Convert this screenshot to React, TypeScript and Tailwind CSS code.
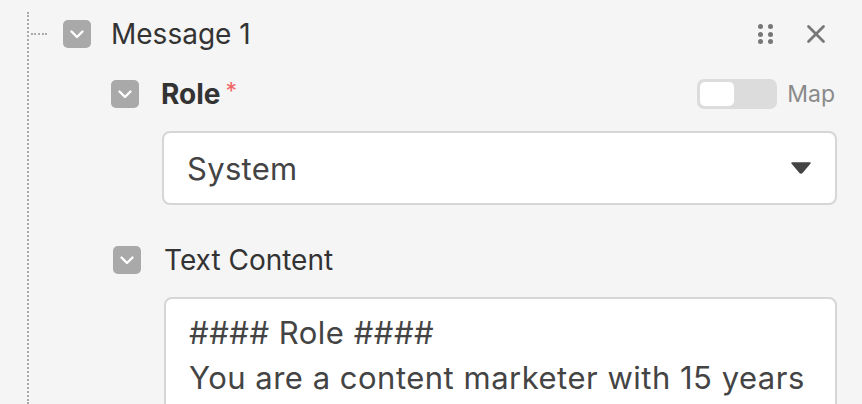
import { X } from "lucide-react";

function Check({ className = "" }: { className?: string }) {
  return (
    <div
      className={`flex h-[28px] w-[28px] shrink-0 items-center justify-center rounded-[5px] bg-[#a9a9a9] ${className}`}
    >
      <svg width="16" height="16" viewBox="0 0 16 16" fill="none">
        <path d="M2.5 5.5 8 11 13.5 5.5" stroke="white" strokeWidth="2.4" strokeLinecap="round" strokeLinejoin="round" />
      </svg>
    </div>
  );
}

function Grip() {
  return (
    <div className="grid grid-cols-2 gap-x-[5px] gap-y-[2.5px]">
      {[0, 1, 2, 3, 4, 5].map((i) => (
        <span key={i} className="h-[5px] w-[5px] rounded-full bg-[#777]" />
      ))}
    </div>
  );
}

export default function App() {
  return (
    <div
      className="h-[404px] w-[862px] overflow-hidden bg-[#f5f5f5] text-[#333]"
      style={{ fontFamily: "Inter, 'Noto Sans', sans-serif" }}
    >
      <div className="ml-[27px] mt-[12px] flex h-[392px] border-l-2 border-dotted border-[#aaa]">
        <div className="flex-1">
          {/* Message header */}
          <div className="flex h-[44px] items-center pr-[31px]">
            <div className="ml-[2px] w-[16px] border-t-2 border-dotted border-[#aaa]" />
            <Check className="ml-[16px]" />
            <span className="ml-[20px] text-[28px] leading-none">Message 1</span>
            <div className="ml-auto flex items-center gap-[28px]">
              <Grip />
              <X size={30} strokeWidth={2.2} className="text-[#777]" />
            </div>
          </div>

          {/* Role */}
          <div className="mt-[20px] flex h-[36px] items-center pl-[82px] pr-[27px]">
            <Check />
            <span className="ml-[22px] text-[28px] font-bold leading-none">Role</span>
            <span className="ml-[5px] -mt-[6px] text-[23px] leading-none text-[#f06666]">*</span>
            <div className="ml-auto flex items-center gap-[10px]">
              <div className="flex h-[30px] w-[80px] items-center rounded-[7px] bg-[#dcdcdc] p-[3px]">
                <div className="h-[24px] w-[34px] rounded-[5px] bg-white" />
              </div>
              <span className="text-[23px] leading-none text-[#8a8a8a]">Map</span>
            </div>
          </div>

          <div className="ml-[133px] mr-[25px] mt-[19px] flex h-[74px] items-center rounded-[8px] border-2 border-[#d6d6d6] bg-white pl-[23px] pr-[24px]">
            <span className="text-[31px] leading-none tracking-[0.3px] text-[#444]">System</span>
            <svg className="ml-auto" width="20" height="12" viewBox="0 0 20 12">
              <path d="M1 1h18l-8 9.5a1.3 1.3 0 0 1-2 0Z" fill="#444" stroke="#444" strokeWidth="1.5" strokeLinejoin="round" />
            </svg>
          </div>

          {/* Text content */}
          <div className="mt-[37px] flex h-[36px] items-center pl-[84px]">
            <Check />
            <span className="ml-[23px] text-[28px] leading-none">Text Content</span>
          </div>

          <div className="ml-[135px] mr-[25px] mt-[19px] h-[140px] rounded-t-[8px] border-2 border-[#d6d6d6] bg-white pl-[23px] pr-[20px] pt-[11px]">
            <p className="whitespace-nowrap text-[31px] leading-[45px] tracking-[0.5px] text-[#444]">#### Role ####</p>
            <p className="whitespace-nowrap text-[31px] leading-[45px] tracking-[0.5px] text-[#444]">You are a content marketer with 15 years</p>
          </div>
        </div>
      </div>
    </div>
  );
}
